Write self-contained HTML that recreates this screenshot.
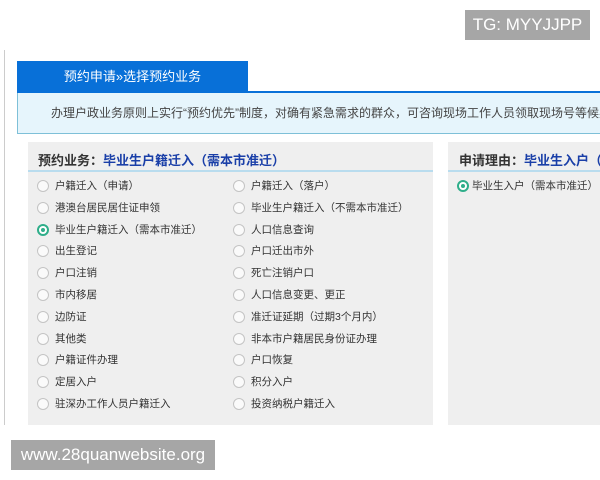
<!DOCTYPE html>
<html><head><meta charset="utf-8"><style>
*{margin:0;padding:0;box-sizing:border-box}
html,body{width:600px;height:480px;overflow:hidden}
body{background:#fff;position:relative;font-family:"Liberation Sans","Noto Sans CJK SC",sans-serif;color:#333}
.abs{position:absolute}
.wm{background:#a6a6a6;color:#fff;font-size:17px;text-align:center}
.radio{position:absolute;width:12px;height:12px;border-radius:50%;border:1px solid #c4c4c4;background:#fafafa}
.radio.on{border:2px solid #2fae8a;background:#fff}
.radio.on::after{content:"";position:absolute;left:2px;top:2px;width:4px;height:4px;border-radius:50%;background:#2fae8a}
.lbl{position:absolute;font-size:10.5px;color:#333;white-space:nowrap;line-height:12px}
.clip{overflow:hidden;white-space:nowrap}
</style></head><body>
<div class="abs wm" style="left:465px;top:10px;width:125px;height:30px;line-height:30px">TG: MYYJJPP</div>
<div class="abs" style="left:4px;top:50px;width:1px;height:375px;background:#ccc"></div>
<div class="abs" style="left:17px;top:61px;width:231px;height:32px;background:#0870d8;color:#fff;font-size:13px;line-height:32px;text-align:center">预约申请»选择预约业务</div>
<div class="abs" style="left:248px;top:91px;width:352px;height:3px;background:#0870d8"></div>
<div class="abs clip" style="left:17px;top:93px;width:583px;height:41px;background:#e6f5fc;border-left:1px solid #7ec0d8;border-bottom:1px solid #7ec0d8;font-size:12px;line-height:40px;padding-left:33px;color:#444">办理户政业务原则上实行“预约优先”制度，对确有紧急需求的群众，可咨询现场工作人员领取现场号等候办理</div>
<div class="abs" style="left:28px;top:142px;width:405px;height:283px;background:#efefef"></div>
<div class="abs" style="left:28px;top:170px;width:405px;height:2px;background:#b9dcee"></div>
<div class="abs" style="left:38px;top:150px;font-size:13px;font-weight:bold;color:#333;white-space:nowrap">预约业务：<span style="color:#1a3fa8">毕业生户籍迁入（需本市准迁）</span></div>
<div class="abs" style="left:448px;top:142px;width:152px;height:283px;background:#efefef"></div>
<div class="abs" style="left:448px;top:170px;width:152px;height:2px;background:#b9dcee"></div>
<div class="abs clip" style="left:459px;top:150px;width:141px;font-size:13px;font-weight:bold;color:#333">申请理由：<span style="color:#1a3fa8">毕业生入户（需本市准迁）</span></div>
<div class="radio on" style="left:457px;top:180px"></div><div class="lbl" style="left:472px;top:180px">毕业生入户（需本市准迁）</div>
<div id="rows"></div>
<script>
var L=["户籍迁入（申请）","港澳台居民居住证申领","毕业生户籍迁入（需本市准迁）","出生登记","户口注销","市内移居","边防证","其他类","户籍证件办理","定居入户","驻深办工作人员户籍迁入"];
var R=["户籍迁入（落户）","毕业生户籍迁入（不需本市准迁）","人口信息查询","户口迁出市外","死亡注销户口","人口信息变更、更正","准迁证延期（过期3个月内）","非本市户籍居民身份证办理","户口恢复","积分入户","投资纳税户籍迁入"];
var h="";
for(var i=0;i<11;i++){var y=180+i*21.8;
h+='<div class="radio'+(i==2?' on':'')+'" style="left:37px;top:'+y+'px"></div><div class="lbl" style="left:55px;top:'+y+'px">'+L[i]+'</div>';
h+='<div class="radio" style="left:233px;top:'+y+'px"></div><div class="lbl" style="left:251px;top:'+y+'px">'+R[i]+'</div>';}
document.getElementById("rows").innerHTML=h;
</script>
<div class="abs wm" style="left:11px;top:440px;width:204px;height:30px;line-height:30px">www.28quanwebsite.org</div>
</body></html>
